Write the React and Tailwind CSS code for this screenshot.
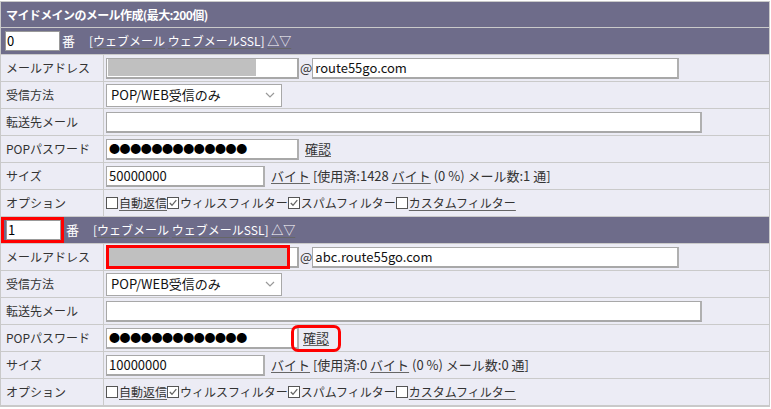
import React from 'react'

const font = { fontFamily: '"Noto Sans CJK JP", "Noto Sans", sans-serif' }

const Check = ({ checked }) => (
  <span className="inline-flex items-center justify-center w-[12px] h-[12px] border border-[#555] bg-white mr-[1px] align-middle">
    {checked && (
      <svg width="10" height="10" viewBox="0 0 10 10">
        <path d="M1.8 5 L4 7.3 L8.3 2.2" fill="none" stroke="#666" strokeWidth="1.3" />
      </svg>
    )}
  </span>
)

const Link = ({ children }) => (
  <span className="underline decoration-[#666] underline-offset-2">{children}</span>
)

const Input = ({ className = '', children }) => (
  <div className={`h-[21px] bg-white border border-[#a8a8a8] border-r-2 border-b-2 border-r-[#b0b0b0] flex items-center px-[2px] text-[13px] text-[#111] ${className}`}>
    {children}
  </div>
)

const Row = ({ label, children }) => (
  <div className="flex h-[27px] border-b border-[#cacaca]">
    <div className="w-[103px] shrink-0 border-r border-[#cacaca] pl-[5px] flex items-center text-[12px] text-[#333]">
      {label}
    </div>
    <div className="flex-1 flex items-center pl-[2px] text-[13px] text-[#333]">{children}</div>
  </div>
)

const SectionHeader = ({ num, highlight }) => (
  <div className="flex h-[27px] items-center bg-[#6e6c8a] border-b border-[#cacaca] text-white text-[12px]">
    <div className={`${highlight ? 'border-[3px] border-[#ff0000] pl-[2px]' : 'pl-[4px]'} flex items-center h-[26px]`}>
      <div className="w-[55px] h-[20px] bg-white border border-[#999] flex items-center px-[1px] text-[13px] text-black">{num}</div>
    </div>
    <span className="ml-[2px] text-[13px]">番</span>
    <span className="ml-[14px]">[<Link>ウェブメール</Link> <Link>ウェブメールSSL</Link>] <Link>△▽</Link></span>
  </div>
)

const Section = ({ num, domain, size, used, count, highlight }) => (
  <>
    <SectionHeader num={num} highlight={highlight} />
    <Row label="メールアドレス">
      <div className="w-[193px] h-[21px] bg-white border border-[#a8a8a8] border-r-2 border-b-2 flex items-center relative">
        {highlight ? (
          <div className="absolute left-[-1px] top-[-3px] w-[184px] h-[24px] border-[3px] border-[#ff0000] bg-[#c0c0c0]" />
        ) : (
          <div className="w-[148px] h-[17px] bg-[#c0c0c0] ml-[1px]" />
        )}
      </div>
      <span className="ml-[1px]">@</span>
      <Input className="w-[367px]">{domain}</Input>
    </Row>
    <Row label="受信方法">
      <div className="w-[176px] h-[23px] bg-white border border-[#a8a8a8] flex items-center justify-between pl-[4px] pr-[6px] text-[13px] text-[#111]">
        <span>POP/WEB受信のみ</span>
        <svg width="10" height="6" viewBox="0 0 10 6">
          <path d="M1 1 L5 5 L9 1" fill="none" stroke="#999" strokeWidth="1.2" />
        </svg>
      </div>
    </Row>
    <Row label="転送先メール">
      <Input className="w-[596px]" />
    </Row>
    <Row label="POPパスワード">
      <Input className="w-[193px]">
        <span className="text-[11px] tracking-[-0.4px] text-black leading-none">●●●●●●●●●●●●●</span>
      </Input>
      {highlight ? (
        <span className="ml-[-8px] border-[3px] border-[#ff0000] rounded-[7px] px-[9px] h-[27px] flex items-center">
          <Link>確認</Link>
        </span>
      ) : (
        <span className="ml-[6px]"><Link>確認</Link></span>
      )}
    </Row>
    <Row label="サイズ">
      <Input className="w-[159px]">{size}</Input>
      <span className="ml-[6px] whitespace-nowrap">
        <Link>バイト</Link> [使用済:{used} <Link>バイト</Link> (0 %) メール数:{count} 通]
      </span>
    </Row>
    <Row label="オプション">
      <span className="flex items-center whitespace-nowrap text-[12px]">
        <Check /><Link>自動返信</Link>
        <Check checked />ウィルスフィルター
        <Check checked />スパムフィルター
        <Check /><Link>カスタムフィルター</Link>
      </span>
    </Row>
  </>
)

export default function App() {
  return (
    <div className="w-[771px] h-[409px] bg-white pt-[1px]" style={font}>
      <div className="w-[770px] border border-[#c9c9c9] bg-[#ececf5]">
        <div className="h-[26px] bg-[#6e6c8a] border-b border-[#cacaca] flex items-center pl-[5px] text-white text-[12px] tracking-[-0.6px] font-bold">
          マイドメインのメール作成(最大:200個)
        </div>
        <Section num="0" domain="route55go.com" size="50000000" used="1428" count="1" />
        <Section num="1" domain="abc.route55go.com" size="10000000" used="0" count="0" highlight />
      </div>
    </div>
  )
}
